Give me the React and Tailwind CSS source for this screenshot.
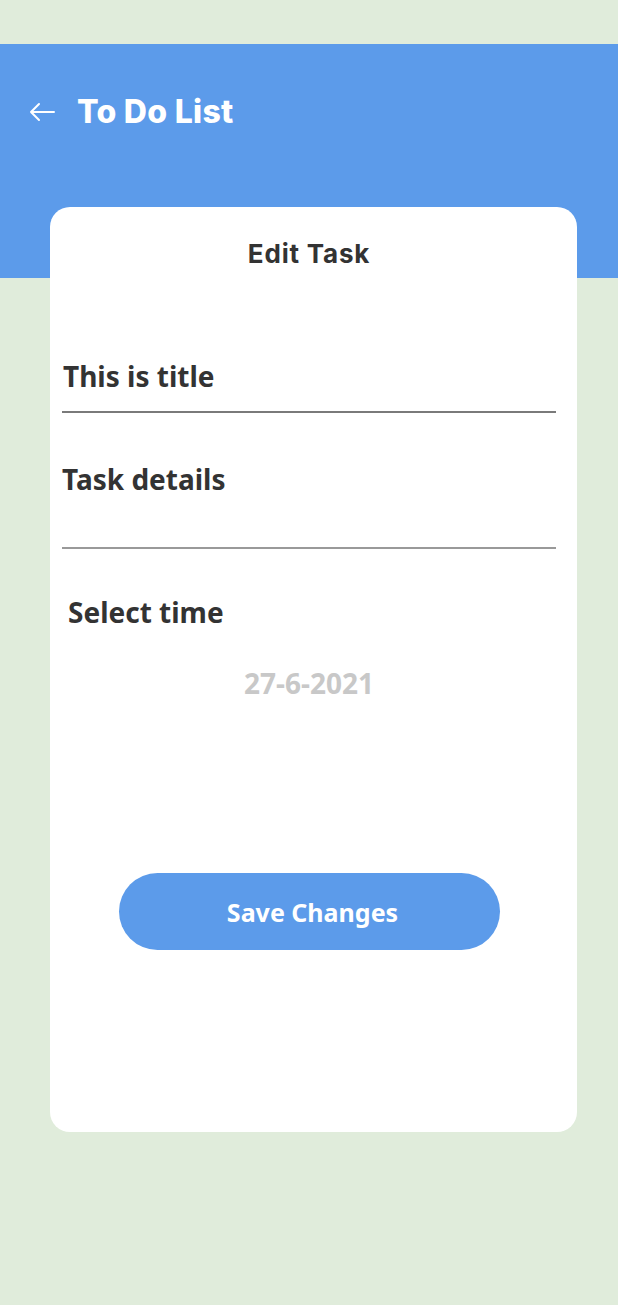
const App = () => {
  return (
    <div className="min-h-[1305px] bg-[#e0ecdb] pt-[44px] font-['Noto_Sans',sans-serif]">
      <header className="h-[234px] bg-[#5c9bea]">
        <div className="flex items-center pl-[29px] pt-[50px]">
          <svg width="26" height="20" viewBox="0 0 26 20" fill="none" stroke="white" strokeWidth="2" strokeLinecap="round" strokeLinejoin="round">
            <path d="M25 10H2M10 2L2 10l8 8" />
          </svg>
          <h1 className="ml-[22px] font-['Inter',sans-serif] text-[32px] leading-[36px] font-extrabold tracking-[0.3px] text-white">
            To Do List
          </h1>
        </div>
      </header>

      <div className="ml-[50px] -mt-[71px] h-[925px] w-[527px] rounded-[20px] bg-white pl-[12px] pr-[21px] pt-[31px] text-[#333333]">
        <h2 className="text-center font-['Inter',sans-serif] text-[26px] leading-[32px] font-bold tracking-[0.8px]">Edit Task</h2>

        <div className="mt-[88px] border-b-2 border-[#7a7a7a] pb-[17px]">
          <p className="pl-[1px] text-[28px] leading-[36px] font-bold">This is title</p>
        </div>

        <div className="mt-[48px] border-b-2 border-[#999999] pb-[50px]">
          <p className="text-[28px] leading-[36px] font-bold">Task details</p>
        </div>

        <p className="mt-[45px] pl-[6px] text-[28px] leading-[36px] font-bold">Select time</p>

        <p className="mt-[37px] text-center text-[28px] leading-[32px] font-bold text-[#c8c8c8]">27-6-2021</p>

        <button className="mx-auto mt-[174px] flex h-[77px] w-[381px] items-center justify-center rounded-full bg-[#5c9bea] pl-[7px] pt-[3px] text-[25px] font-bold text-white">
          Save Changes
        </button>
      </div>
    </div>
  );
};

export default App;
